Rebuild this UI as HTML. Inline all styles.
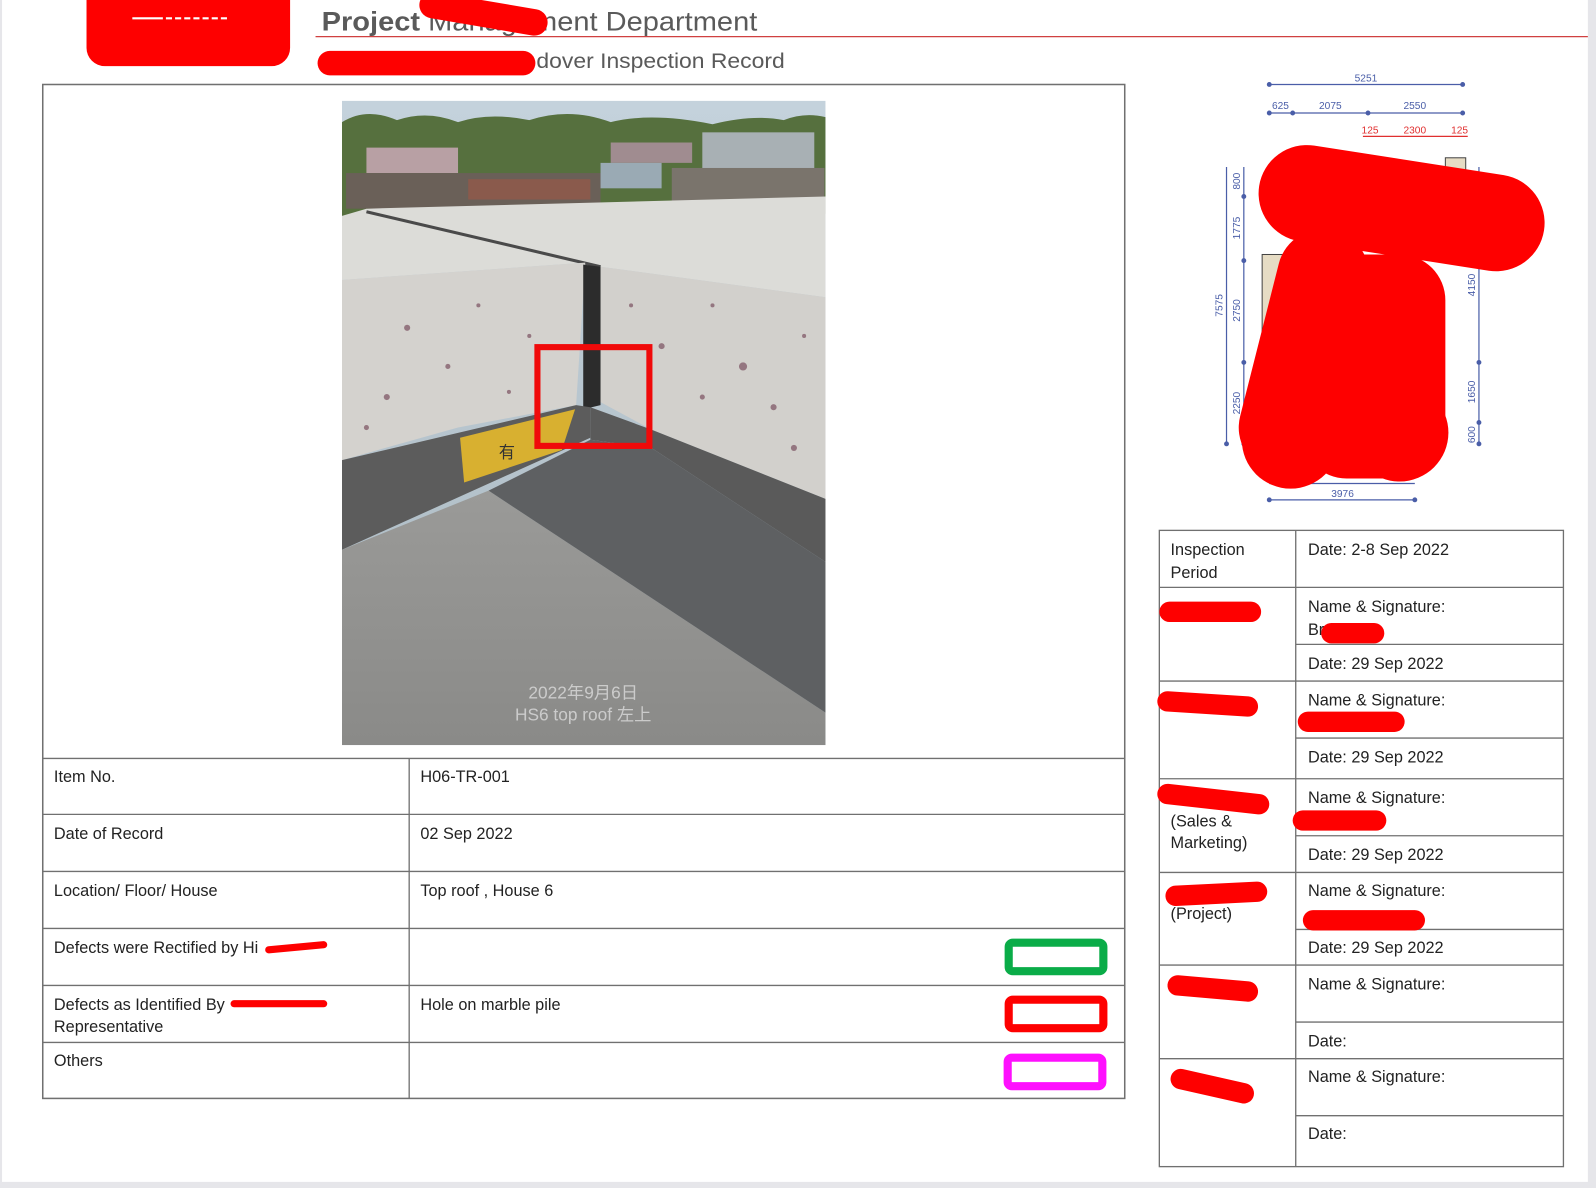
<!DOCTYPE html>
<html><head><meta charset="utf-8"><style>
html,body{margin:0;padding:0;background:#fff;}
svg{display:block;}
text{font-family:"Liberation Sans","Noto Sans CJK SC",sans-serif;}
</style></head><body>
<svg width="1596" height="1188" viewBox="0 0 1568 1167" preserveAspectRatio="none" xmlns="http://www.w3.org/2000/svg">
<rect x="0" y="0" width="1568" height="1167" fill="#fff"/>
<rect x="1560" y="0" width="8" height="1167" fill="#e6e6ea"/>
<rect x="0" y="1161" width="1568" height="6" fill="#e6e6ea"/>
<rect x="0" y="0" width="2" height="1167" fill="#e6e6ea"/>

<!-- header -->
<rect x="85" y="-20" width="200" height="85" rx="18" fill="#fe0000"/>
<line x1="130" y1="18" x2="240" y2="18" stroke="#fff" stroke-width="2" stroke-dasharray="30 3 6 3 6 3 6 3 6 3 6 3 6 3 6"/>
<text x="316" y="30" font-size="26" fill="#5a5a5a" textLength="428" lengthAdjust="spacingAndGlyphs"><tspan font-weight="bold">Project</tspan> Management Department</text>
<line x1="310" y1="36" x2="1560" y2="36" stroke="#d04040" stroke-width="1.2"/>
<line x1="425" y1="5" x2="525" y2="22" stroke="#fe0000" stroke-width="26" stroke-linecap="round"/>
<text x="527" y="67" font-size="21" fill="#5a5a5a" textLength="244" lengthAdjust="spacingAndGlyphs">dover Inspection Record</text>
<line x1="324" y1="62" x2="514" y2="62" stroke="#fe0000" stroke-width="24" stroke-linecap="round"/>

<!-- main box -->
<rect x="42" y="83" width="1063" height="996" fill="none" stroke="#707070" stroke-width="1.5"/>

<!-- photo -->
<svg x="336" y="99" width="475" height="633" viewBox="336 99 475 633" preserveAspectRatio="none">
<defs>
<linearGradient id="sky" x1="0" y1="0" x2="0" y2="1"><stop offset="0" stop-color="#c4d2dc"/><stop offset="1" stop-color="#aab8c0"/></linearGradient>
<linearGradient id="fl" x1="0" y1="0" x2="0" y2="1"><stop offset="0" stop-color="#9a9a98"/><stop offset="1" stop-color="#8a8a88"/></linearGradient>
</defs>
<rect x="336" y="99" width="475" height="633" fill="url(#sky)"/>
<path d="M336 120 Q360 105 390 118 Q420 108 450 120 Q480 110 520 118 Q560 105 600 120 Q640 110 700 122 Q740 112 770 118 Q790 110 811 115 L811 210 L336 215Z" fill="#56703e"/>
<rect x="360" y="145" width="90" height="25" fill="#b8a0a4"/>
<rect x="600" y="140" width="80" height="20" fill="#a08c90"/>
<rect x="690" y="130" width="110" height="40" fill="#a8b0b4"/>
<rect x="340" y="170" width="250" height="35" fill="#6a6058"/>
<rect x="460" y="176" width="120" height="20" fill="#8a5a4c"/>
<rect x="590" y="160" width="60" height="25" fill="#9aaab4"/>
<rect x="660" y="165" width="150" height="35" fill="#7a746c"/>
<polygon points="336,212 360,205 811,193 811,292 590,262 575,258 336,275" fill="#dcdcd8"/>
<line x1="360" y1="208" x2="590" y2="262" stroke="#4a4a4a" stroke-width="3"/>
<polygon points="336,275 575,258 566,398 450,420 336,452" fill="#d4d2ce"/>
<polygon points="590,262 811,292 811,490 640,422 590,395" fill="#d2d0cc"/>
<polygon points="573,260 590,262 590,398 573,402" fill="#2c2c2c"/>
<g fill="#7a5060" opacity="0.7">
<circle cx="400" cy="322" r="3"/><circle cx="440" cy="360" r="2.5"/><circle cx="380" cy="390" r="3"/><circle cx="520" cy="330" r="2"/><circle cx="470" cy="300" r="2"/><circle cx="360" cy="420" r="2.5"/><circle cx="500" cy="385" r="2"/>
<circle cx="650" cy="340" r="3"/><circle cx="700" cy="300" r="2"/><circle cx="730" cy="360" r="4"/><circle cx="760" cy="400" r="3"/><circle cx="690" cy="390" r="2.5"/><circle cx="790" cy="330" r="2"/><circle cx="780" cy="440" r="3"/><circle cx="620" cy="300" r="2"/>
</g>
<polygon points="336,452 566,398 580,400 580,430 336,540" fill="#5c5c5c"/>
<polygon points="580,400 640,422 811,490 811,552 640,440 580,432" fill="#5a5a5a"/>
<polygon points="336,540 480,482 811,700 811,732 336,732" fill="url(#fl)"/>
<polygon points="480,482 580,432 640,440 811,552 811,700" fill="#5e6062"/>
<polygon points="452,430 565,402 552,442 456,474" fill="#d8b030"/>
<text x="490" y="450" font-size="16" fill="#333">有</text>
<rect x="528" y="341" width="110" height="97" fill="none" stroke="#f00a0a" stroke-width="6"/>
<text x="573" y="686" font-size="17" fill="#e0e0e0" fill-opacity="0.75" text-anchor="middle">2022年9月6日</text>
<text x="573" y="708" font-size="17" fill="#e0e0e0" fill-opacity="0.75" text-anchor="middle">HS6 top roof 左上</text>
</svg>

<!-- left table -->
<g stroke="#707070" stroke-width="1.3">
<line x1="42" y1="745" x2="1105" y2="745"/>
<line x1="42" y1="800" x2="1105" y2="800"/>
<line x1="42" y1="856" x2="1105" y2="856"/>
<line x1="42" y1="912" x2="1105" y2="912"/>
<line x1="42" y1="968" x2="1105" y2="968"/>
<line x1="42" y1="1024" x2="1105" y2="1024"/>
<line x1="402" y1="745" x2="402" y2="1079"/>
</g>
<g font-size="16" fill="#222">
<text x="53" y="768">Item No.</text>
<text x="413" y="768">H06-TR-001</text>
<text x="53" y="824">Date of Record</text>
<text x="413" y="824">02 Sep 2022</text>
<text x="53" y="880">Location/ Floor/ House</text>
<text x="413" y="880">Top roof , House 6</text>
<text x="53" y="936">Defects were Rectified by Hi</text>
<text x="53" y="992">Defects as Identified By</text>
<text x="53" y="1014">Representative</text>
<text x="413" y="992">Hole on marble pile</text>
<text x="53" y="1047">Others</text>
</g>
<line x1="264" y1="933" x2="318" y2="928" stroke="#fe0000" stroke-width="7" stroke-linecap="round"/>
<line x1="230" y1="986" x2="318" y2="986" stroke="#fe0000" stroke-width="7" stroke-linecap="round"/>
<rect x="991" y="926" width="93" height="28" rx="4" fill="none" stroke="#0aac48" stroke-width="8"/>
<rect x="991" y="982" width="93" height="28" rx="4" fill="none" stroke="#fe0000" stroke-width="8"/>
<rect x="990" y="1039" width="93" height="28" rx="4" fill="none" stroke="#fe10fe" stroke-width="8"/>

<!-- drawing -->
<g stroke="#4a5ea8" stroke-width="1.2" fill="#4a5ea8">
<line x1="1247" y1="83" x2="1437" y2="83"/>
<line x1="1247" y1="111" x2="1437" y2="111"/>
<line x1="1205" y1="164" x2="1205" y2="436"/>
<line x1="1222" y1="164" x2="1222" y2="436"/>
<line x1="1453" y1="164" x2="1453" y2="436"/>
<line x1="1247" y1="475" x2="1390" y2="475"/>
<line x1="1247" y1="491" x2="1390" y2="491"/>
<circle cx="1247" cy="83" r="1.8"/><circle cx="1437" cy="83" r="1.8"/>
<circle cx="1247" cy="111" r="1.8"/><circle cx="1270" cy="111" r="1.8"/><circle cx="1344" cy="111" r="1.8"/><circle cx="1437" cy="111" r="1.8"/>
<circle cx="1222" cy="193" r="1.8"/><circle cx="1222" cy="256" r="1.8"/><circle cx="1222" cy="356" r="1.8"/><circle cx="1222" cy="436" r="1.8"/><circle cx="1205" cy="436" r="1.8"/>
<circle cx="1453" cy="356" r="1.8"/><circle cx="1453" cy="415" r="1.8"/><circle cx="1453" cy="436" r="1.8"/>
<circle cx="1247" cy="491" r="1.8"/><circle cx="1390" cy="491" r="1.8"/>
</g>
<g font-size="10" fill="#4a5ea8" text-anchor="middle">
<text x="1342" y="80">5251</text>
<text x="1258" y="107">625</text>
<text x="1307" y="107">2075</text>
<text x="1390" y="107">2550</text>
<text x="1319" y="488">3976</text>
<text transform="translate(1218,178) rotate(-90)">800</text>
<text transform="translate(1218,224) rotate(-90)">1775</text>
<text transform="translate(1218,305) rotate(-90)">2750</text>
<text transform="translate(1218,396) rotate(-90)">2250</text>
<text transform="translate(1201,300) rotate(-90)">7575</text>
<text transform="translate(1449,280) rotate(-90)">4150</text>
<text transform="translate(1449,385) rotate(-90)">1650</text>
<text transform="translate(1449,427) rotate(-90)">600</text>
</g>
<line x1="1339" y1="134" x2="1442" y2="134" stroke="#e03030" stroke-width="1.2"/>
<g font-size="10" fill="#e03030" text-anchor="middle">
<text x="1346" y="131">125</text><text x="1390" y="131">2300</text><text x="1434" y="131">125</text>
</g>
<rect x="1240" y="250" width="30" height="105" fill="#e6dcc4" stroke="#444" stroke-width="1"/>
<rect x="1420" y="155" width="20" height="20" fill="#e6dcc4" stroke="#444" stroke-width="1"/>
<line x1="1284" y1="190" x2="1470" y2="219" stroke="#fe0000" stroke-width="95" stroke-linecap="round"/>
<line x1="1300" y1="270" x2="1262" y2="420" stroke="#fe0000" stroke-width="90" stroke-linecap="round"/>
<rect x="1278" y="250" width="142" height="220" rx="45" fill="#fe0000"/>
<circle cx="1268" cy="432" r="48" fill="#fe0000"/>
<circle cx="1375" cy="425" r="48" fill="#fe0000"/>

<!-- right table -->
<g stroke="#707070" stroke-width="1.3" fill="none">
<rect x="1139" y="521" width="397" height="625"/>
<line x1="1273" y1="521" x2="1273" y2="1146"/>
<line x1="1139" y1="577" x2="1536" y2="577"/>
<line x1="1273" y1="633" x2="1536" y2="633"/>
<line x1="1139" y1="669" x2="1536" y2="669"/>
<line x1="1273" y1="725" x2="1536" y2="725"/>
<line x1="1139" y1="765" x2="1536" y2="765"/>
<line x1="1273" y1="821" x2="1536" y2="821"/>
<line x1="1139" y1="857" x2="1536" y2="857"/>
<line x1="1273" y1="913" x2="1536" y2="913"/>
<line x1="1139" y1="948" x2="1536" y2="948"/>
<line x1="1273" y1="1004" x2="1536" y2="1004"/>
<line x1="1139" y1="1040" x2="1536" y2="1040"/>
<line x1="1273" y1="1096" x2="1536" y2="1096"/>
</g>
<g font-size="16" fill="#222">
<text x="1150" y="545">Inspection</text>
<text x="1150" y="568">Period</text>
<text x="1285" y="545">Date: 2-8 Sep 2022</text>
<text x="1285" y="601">Name &amp; Signature:</text>
<text x="1285" y="624">Br</text>
<text x="1285" y="657">Date: 29 Sep 2022</text>
<text x="1285" y="693">Name &amp; Signature:</text>
<text x="1285" y="749">Date: 29 Sep 2022</text>
<text x="1285" y="789">Name &amp; Signature:</text>
<text x="1150" y="812">(Sales &amp;</text>
<text x="1150" y="833">Marketing)</text>
<text x="1285" y="845">Date: 29 Sep 2022</text>
<text x="1285" y="880">Name &amp; Signature:</text>
<text x="1150" y="903">(Project)</text>
<text x="1285" y="936">Date: 29 Sep 2022</text>
<text x="1285" y="972">Name &amp; Signature:</text>
<text x="1285" y="1028">Date:</text>
<text x="1285" y="1063">Name &amp; Signature:</text>
<text x="1285" y="1119">Date:</text>
</g>
<g stroke="#fe0000" stroke-width="20" stroke-linecap="round">
<line x1="1149" y1="601" x2="1229" y2="601"/>
<line x1="1147" y1="689" x2="1226" y2="694"/>
<line x1="1147" y1="780" x2="1237" y2="790"/>
<line x1="1155" y1="880" x2="1235" y2="876"/>
<line x1="1157" y1="968" x2="1226" y2="974"/>
<line x1="1160" y1="1060" x2="1222" y2="1074"/>
<line x1="1308" y1="622" x2="1350" y2="622"/>
<line x1="1285" y1="709" x2="1370" y2="709"/>
<line x1="1280" y1="806" x2="1352" y2="806"/>
<line x1="1290" y1="904" x2="1390" y2="904"/>
</g>
</svg>
</body></html>
